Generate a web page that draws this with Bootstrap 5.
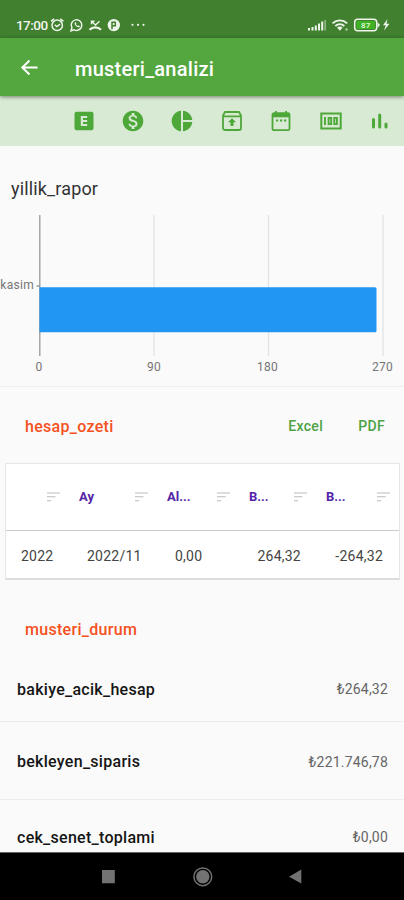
<!DOCTYPE html>
<html lang="tr">
<head>
<meta charset="utf-8">
<meta name="viewport" content="width=device-width, initial-scale=1">
<title>musteri_analizi</title>
<link href="https://cdn.jsdelivr.net/npm/bootstrap@5.3.0/dist/css/bootstrap.min.css" rel="stylesheet">
<style>
body{font-family:Roboto,"Liberation Sans",sans-serif;background:#fafafa;color:#212121;height:900px;overflow:hidden}
svg{display:block;flex:none}
.status{height:38px;background:#41802f;color:#f1f6ee;padding:12px 13px 0 16px}
.clock{font-size:13.5px;font-weight:500;line-height:26px;width:32px;letter-spacing:-.55px}
.appbar{height:58px;background:#54a73f;box-shadow:0 1px 4px rgba(0,0,0,.45);padding:2px 19px 0;position:relative}
.apptitle{font-size:20px;font-weight:500;color:#fff;margin-left:35px;padding-top:2px;letter-spacing:.25px}
.tools{height:50px;background:#d8ead3;color:#4ea839;padding:0 12px 0 71.5px}
.report{height:241px;border-bottom:1px solid #eee}
.report h2{font-size:18px;font-weight:400;line-height:24px;margin:0;padding:31px 0 0 11px;letter-spacing:.15px;color:#333}
.axis{font-size:12px;fill:#757575;letter-spacing:.3px}
.summary{height:76px;padding:3px 19px 0 25px}
.heading{color:#f4511e;font-size:16px;font-weight:500;letter-spacing:.3px}
.export{color:#4ea245;font-size:14px;font-weight:500;letter-spacing:.35px}
.export+.export{margin-left:35px}
.grid-box{margin:0 4px 0 5px;height:117px;background:#fff;border:1px solid #e6e6e6;border-bottom:2px solid #ddd}
.grid-head,.grid-body{display:grid;grid-template-columns:73px 88px 82px 77px 1fr;align-items:center}
.grid-head{height:67px;border-bottom:1px solid #ccc;color:#5223a8;font-size:13px;font-weight:700}
.grid-head>div{padding:0 19px 0 0}
.grid-head>div:last-child{padding-right:9px}
.grid-body{height:51px;margin-left:-1px;grid-template-columns:82px 88px 58px 68px 1fr;font-size:14px;color:#444;letter-spacing:.25px}
.status-title{height:76px;padding:24px 25px 0}
.line{font-size:16px;font-weight:500;color:#151515;padding:2px 16px 0 17px;border-bottom:1px solid #ececec}
.line small{font-size:14px;font-weight:400;color:#666;letter-spacing:.2px}
.line span{letter-spacing:.28px}
.status-title+.line{height:66px}
.line+.line{height:78px;padding-top:3px}
.line:last-child{height:73px}
.navkeys{height:48px;background:#000;border-top:1px solid #666;color:#727272}
</style>
</head>
<body class="d-flex flex-column">
<div class="status d-flex align-items-center flex-shrink-0">
  <span class="clock">17:00</span>
  <svg width="108" height="20" viewBox="48 14.700 108 20" fill="none" stroke="#eef5eb" stroke-width="1.5">
    <circle cx="57.2" cy="25" r="5.2"/><path d="M51 21l3-2.5M63.400 21l-3-2.500M54.800 24.500l2.200 1.800 3-2.400"/>
    <path d="M71 30.500l.9-3.100a5.300 5.300 0 1 1 2.200 2.100z"/><path d="M74.500 22.500c0 2.500 2 4.600 4.700 4.700l.8-1.300-1.700-.9-.8.8-1.700-1.800.7-.8-.7-1.300z" fill="#eef5eb" stroke="none"/>
    <path d="M89.500 29.500c3.200-3.300 8.300-3.300 11.500 0" stroke-width="2.300"/><path d="M91.500 21l4 3.700 4-3.700M91.500 24v-3h3" stroke-width="1.400"/>
    <circle cx="113.800" cy="24.800" r="6.200" fill="#eef5eb" stroke="none"/><path d="M112 29v-7h3.300v3.400H112" stroke="#41802f"/>
    <g fill="#eef5eb" stroke="none"><circle cx="132.500" cy="24.500" r="1.100"/><circle cx="138" cy="24.500" r="1.100"/><circle cx="143.500" cy="24.500" r="1.100"/></g>
  </svg>
  <svg class="ms-auto" width="84" height="20" viewBox="307 15 84 20" fill="#eef5eb">
    <path d="M308 28h2v2.500h-2zM311.500 27h2v3.500h-2zM314.800 25.500h2v5h-2zM318 23.500h2v7h-2zM321.200 21.500h2v9h-2z"/><path d="M324.300 20h1.700v10.500h-1.700z" opacity=".45"/>
    <g fill="none" stroke="#eef5eb" stroke-width="1.800"><path d="M332.500 23.300c4.300-3.900 10.400-3.900 14.700 0M335.300 26c2.700-2.300 6.400-2.300 9.100 0"/></g><path d="M337 27.500c1.700-1.200 4-1.200 5.700 0l-2.800 3.300z"/><circle cx="346.500" cy="29.500" r="1.300" opacity=".6"/>
    <rect x="354.700" y="19.200" width="22" height="11.500" rx="3" fill="none" stroke="#eef5eb" stroke-width="1.500"/><rect x="356.500" y="21" width="18.500" height="8" rx="1" fill="#3fb224"/><path d="M377.500 22l2.500 3-2.500 3z"/>
    <text x="365.700" y="28" text-anchor="middle" font-size="8" font-weight="700" fill="#d8f5d0">87</text>
    <path d="M387.500 19l-4.500 6.300h2.800L384 30.500l5.500-6.800h-3z"/>
  </svg>
</div>
<header class="appbar d-flex align-items-center flex-shrink-0">
  <svg width="21" height="20" viewBox="0 0 21 20" fill="none" stroke="#fff" stroke-width="2"><path d="M18.500 9.500H4M10.500 2.500l-7.200 7 7.200 7"/></svg>
  <span class="apptitle">musteri_analizi</span>
</header>
<nav class="tools d-flex align-items-center justify-content-between flex-shrink-0">
  <svg width="24" height="24" viewBox="0 0 24 24" fill="currentColor"><path fill-rule="evenodd" d="M4.500 2.800h15a2 2 0 0 1 2 2v14.400a2 2 0 0 1-2 2h-15a2 2 0 0 1-2-2V4.800a2 2 0 0 1 2-2zM8.800 7v10h6.400v-2H11v-2h4.200v-2H11V9h4.200V7z"/></svg>
  <svg width="24" height="24" viewBox="0 0 24 24" fill="currentColor"><path d="M12 1.700C6.300 1.700 1.700 6.300 1.700 12S6.300 22.300 12 22.300 22.300 17.700 22.300 12 17.700 1.700 12 1.700zm1.410 16.390V20h-2.670v-1.930c-1.710-.36-3.160-1.460-3.270-3.400h1.960c.1 1.050.82 1.870 2.650 1.870 1.960 0 2.400-.98 2.400-1.590 0-.83-.44-1.610-2.670-2.140-2.480-.6-4.180-1.620-4.180-3.670 0-1.720 1.390-2.840 3.110-3.210V4h2.670v1.950c1.860.45 2.790 1.860 2.850 3.390H14.300c-.05-1.110-.64-1.870-2.220-1.870-1.500 0-2.400.68-2.400 1.640 0 .84.65 1.390 2.670 1.910s4.180 1.390 4.180 3.910c-.01 1.830-1.380 2.830-3.120 3.160z"/></svg>
  <svg width="24" height="24" viewBox="0 0 24 24" fill="currentColor"><path d="M11 1.700v20.600C5.900 21.800 1.700 17.400 1.700 12S5.900 2.200 11 1.700zm2 0V11h9.300C21.800 6.100 17.900 2.200 13 1.700zM13 13v9.300c4.900-.5 8.800-4.400 9.300-9.300z"/></svg>
  <svg width="24" height="24" viewBox="0 0 24 24" fill="none" stroke="currentColor" stroke-width="1.800"><path d="M5 3h14l2 3.500V19a2 2 0 0 1-2 2H5a2 2 0 0 1-2-2V6.500zM3 7.300h18"/><path d="M12 9.300l4 4h-2.500V17h-3v-3.700H8z" fill="currentColor" stroke="none"/></svg>
  <svg width="24" height="24" viewBox="0 0 24 24" fill="none" stroke="currentColor" stroke-width="1.800"><rect x="3.500" y="4.200" width="17" height="17" rx="1.500"/><path d="M3 6.300h18" stroke-width="4"/><path d="M7 2v4M17 2v4"/><path d="M7 11.500h2.200M11 11.500h2.200M15 11.500h2.200"/></svg>
  <svg width="24" height="24" viewBox="0 0 24 24" fill="none" stroke="currentColor" stroke-width="1.900"><path d="M2.300 4.500h19.400v15H2.300z" stroke-width="2"/><path d="M6 8v8M9.600 8.900h2.600v6.200H9.600zM15.300 8.900h2.600v6.200h-2.600z"/></svg>
  <svg width="24" height="24" viewBox="0 0 24 24" fill="none" stroke="currentColor" stroke-width="3" stroke-linecap="round"><path d="M5.500 10.500v7.500M11.700 6v12M18 15v3"/></svg>
</nav>
<main class="flex-fill overflow-hidden">
  <section class="report">
    <h2>yillik_rapor</h2>
    <svg width="404" height="184" viewBox="0 201 404 184">
      <path d="M154 215v141M268.500 215v141M383 215v141" stroke="#e2e2e2" stroke-width="1.200"/>
      <path d="M39.800 215v141M36.500 286h3" stroke="#999" stroke-width="1.300"/>
      <path d="M39.500 287.300H375a1.500 1.500 0 0 1 1.500 1.500v42a1.500 1.500 0 0 1-1.500 1.500H39.500z" fill="#2196f3"/>
      <g class="axis" text-anchor="middle"><text x="39" y="371">0</text><text x="154" y="371">90</text><text x="267.500" y="371">180</text><text x="382.500" y="371">270</text><text x="34" y="289" text-anchor="end">kasim</text></g>
    </svg>
  </section>
  <section class="summary d-flex align-items-center">
    <span class="heading me-auto">hesap_ozeti</span>
    <span class="export">Excel</span><span class="export">PDF</span>
  </section>
  <section class="grid-box">
    <div class="grid-head">
      <div class="d-flex align-items-center justify-content-end"><svg width="13" height="10" viewBox="0 0 13 10" stroke="#bbb" fill="none" stroke-width="1.100"><path d="M0 1h13M0 4.800h8.500M0 8.700h4"/></svg></div>
      <div class="d-flex align-items-center justify-content-between"><span>Ay</span><svg width="13" height="10" viewBox="0 0 13 10" stroke="#bbb" fill="none" stroke-width="1.100"><path d="M0 1h13M0 4.800h8.500M0 8.700h4"/></svg></div>
      <div class="d-flex align-items-center justify-content-between"><span>Al...</span><svg width="13" height="10" viewBox="0 0 13 10" stroke="#bbb" fill="none" stroke-width="1.100"><path d="M0 1h13M0 4.800h8.500M0 8.700h4"/></svg></div>
      <div class="d-flex align-items-center justify-content-between"><span>B...</span><svg width="13" height="10" viewBox="0 0 13 10" stroke="#bbb" fill="none" stroke-width="1.100"><path d="M0 1h13M0 4.800h8.500M0 8.700h4"/></svg></div>
      <div class="d-flex align-items-center justify-content-between"><span>B...</span><svg width="13" height="10" viewBox="0 0 13 10" stroke="#bbb" fill="none" stroke-width="1.100"><path d="M0 1h13M0 4.800h8.500M0 8.700h4"/></svg></div>
    </div>
    <div class="grid-body">
      <span class="ps-3">2022</span><span>2022/11</span><span>0,00</span><span class="text-end">264,32</span><span class="text-end pe-3">-264,32</span>
    </div>
  </section>
  <section>
    <div class="status-title d-flex align-items-center"><span class="heading">musteri_durum</span></div>
    <div class="line d-flex align-items-center justify-content-between"><span>bakiye_acik_hesap</span><small>₺264,32</small></div>
    <div class="line d-flex align-items-center justify-content-between"><span>bekleyen_siparis</span><small>₺221.746,78</small></div>
    <div class="line d-flex align-items-center justify-content-between"><span>cek_senet_toplami</span><small>₺0,00</small></div>
  </section>
</main>
<footer class="navkeys flex-shrink-0 d-flex justify-content-center align-items-center">
  <svg width="204" height="24" viewBox="100 864.500 204 24" fill="currentColor"><path d="M102 869.500h12.800v13.200H102zM301.300 869v14l-12.300-6.800z"/><circle cx="202.800" cy="876.300" r="6.700"/><circle cx="202.800" cy="876.300" r="8.900" fill="none" stroke="currentColor" stroke-width="1.500"/></svg>
</footer>
<script src="https://cdn.jsdelivr.net/npm/bootstrap@5.3.0/dist/js/bootstrap.bundle.min.js"></script>
</body>
</html>
